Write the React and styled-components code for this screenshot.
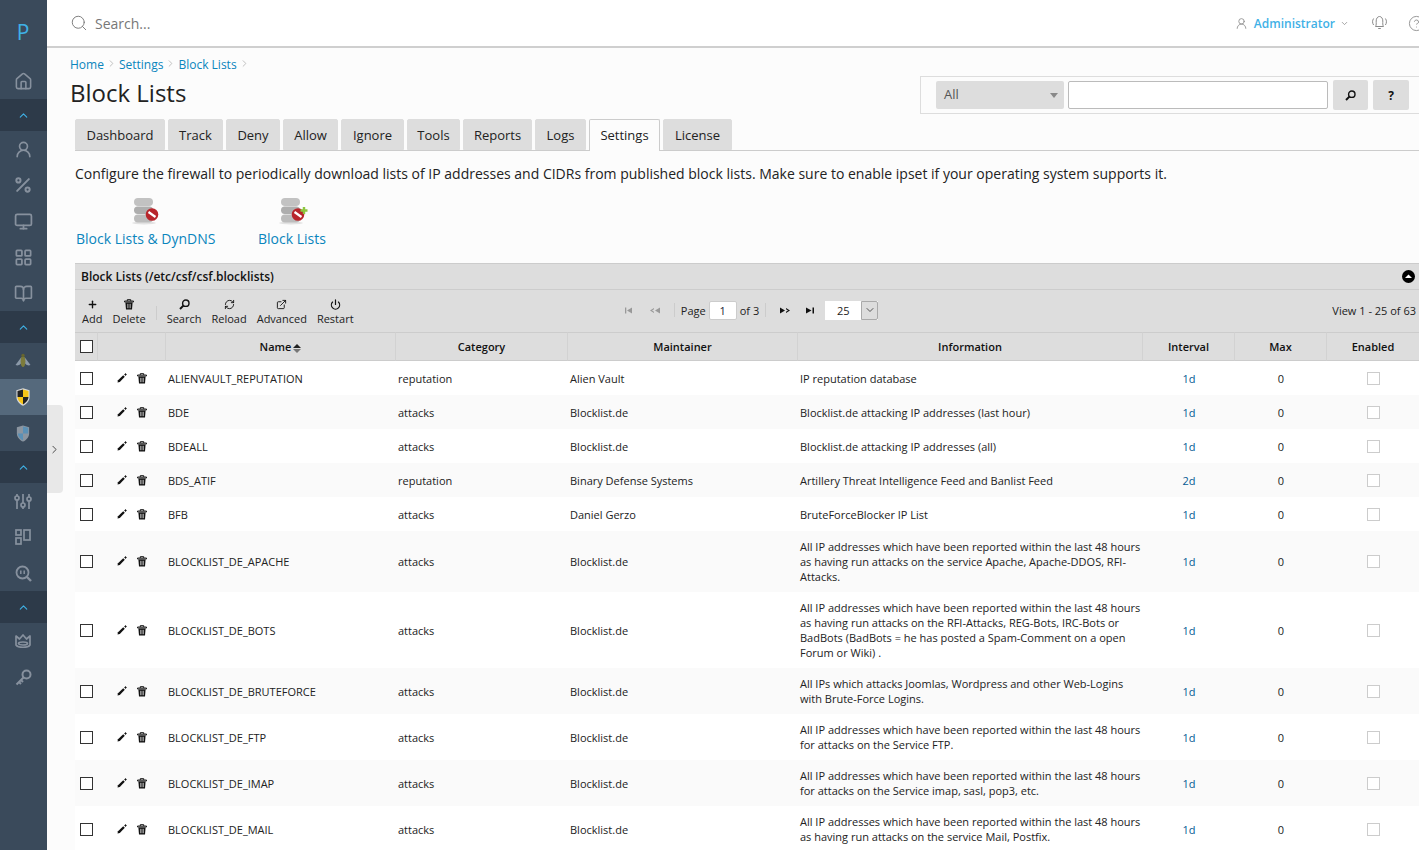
import React from 'react';
import styled, { createGlobalStyle } from 'styled-components';
import {
  Home, ChevronUp, ChevronDown, ChevronRight, UserRound, Percent, Monitor, LayoutGrid, BookOpen,
  Search, CircleHelp, Plus, Power, ExternalLink, RefreshCw,
} from 'lucide-react';

const GlobalStyle = createGlobalStyle`
  html, body { margin: 0; padding: 0; height: 100%; overflow: hidden; }
  body { font-family: "Open Sans", "Liberation Sans", sans-serif; color: #222; background: #fcfcfc; }
`;

const Page = styled.div`
  display: flex;
  width: 1419px;
  height: 850px;
  overflow: hidden;
  position: relative;
`;

const Sidebar = styled.nav`
  width: 47px;
  flex-shrink: 0;
  background: #3a4a5b;
  color: #87919e;
  display: flex;
  flex-direction: column;
`;

const Logo = styled.div`
  height: 63px;
  display: flex;
  align-items: center;
  justify-content: center;
  color: #3fb1e6;
  font-size: 21px;
  padding: 1px 1px 0 0;
  box-sizing: border-box;
`;

const SideItem = styled.div`
  height: 36px;
  display: flex;
  align-items: center;
  justify-content: center;
  padding-right: 1px;
  background: ${(p) => (p.$active ? '#55697c' : 'transparent')};
`;

const SideSection = styled.div`
  height: 32px;
  display: flex;
  align-items: center;
  justify-content: center;
  padding-right: 1px;
  background: #2d3a49;
  color: #3fb1e6;
`;

const Handle = styled.div`
  position: absolute;
  left: 47px;
  top: 405px;
  width: 16px;
  height: 88px;
  padding-right: 2px;
  box-sizing: border-box;
  background: #e8e8e8;
  border-radius: 0 4px 4px 0;
  display: flex;
  align-items: center;
  justify-content: center;
  color: #333;
`;

const Main = styled.div`
  flex: 1;
  min-width: 0;
  display: flex;
  flex-direction: column;
`;

const TopBar = styled.header`
  height: 48px;
  flex-shrink: 0;
  box-sizing: border-box;
  background: #fff;
  border-bottom: 2px solid #cfcfcf;
  display: flex;
  align-items: center;
  padding: 0 0 0 23px;
  color: #8a8a8a;
`;

const TopSearch = styled.div`
  flex: 1;
  display: flex;
  align-items: center;
  gap: 7px;
  font-size: 14px;
  color: #777;
`;

const UserLink = styled.div`
  display: flex;
  align-items: center;
  gap: 6px;
  font-size: 12px;
  font-weight: 600;
  color: #3fb1e6;
  margin-right: 22px;
  svg:last-child { margin-left: -1px; }
`;

const TopIcon = styled.div`
  display: flex;
  margin-right: ${(p) => p.$mr}px;
`;

const TitleRow = styled.div`
  height: 71px;
  flex-shrink: 0;
  display: flex;
  justify-content: space-between;
`;

const TitleBlock = styled.div`
  padding: 8px 0 0 23px;
`;

const Crumbs = styled.div`
  display: flex;
  align-items: center;
  height: 17px;
  font-size: 12px;
  color: #0a85bd;
`;

const CrumbSep = styled.span`
  display: flex;
  color: #bbb;
  margin: 0 2px 2px 2px;
`;

const PageTitle = styled.h1`
  margin: 3px 0 0;
  font-size: 24px;
  font-weight: 400;
  line-height: 33px;
  color: #222;
`;

const FilterBox = styled.div`
  align-self: flex-end;
  margin-bottom: 5px;
  box-sizing: border-box;
  width: 499px;
  height: 38px;
  border: 1px solid #ddd;
  border-right: 0;
  display: flex;
  align-items: center;
  padding-left: 15px;
`;

const FilterSelect = styled.div`
  width: 128px;
  height: 28px;
  box-sizing: border-box;
  background: #ddd;
  border-radius: 2px;
  font-size: 13px;
  color: #555;
  display: flex;
  align-items: center;
  justify-content: space-between;
  padding: 0 6px 2px 8px;
`;

const Caret = styled.span`
  width: 0;
  height: 0;
  margin-top: 3px;
  border-left: 4px solid transparent;
  border-right: 4px solid transparent;
  border-top: 5px solid #888;
`;

const FilterInput = styled.input`
  width: 260px;
  height: 28px;
  box-sizing: border-box;
  margin: 0 5px 0 4px;
  border: 1px solid #bbb;
  border-radius: 2px;
  background: #fff;
`;

const SquareBtn = styled.div`
  width: ${(p) => p.$w}px;
  height: 30px;
  margin-right: 5px;
  background: #ddd;
  border-radius: 2px;
  display: flex;
  align-items: center;
  justify-content: center;
  font-size: 12px;
  font-weight: 700;
  color: #111;
`;

const Tabs = styled.div`
  height: 32px;
  flex-shrink: 0;
  box-sizing: border-box;
  margin-left: 28px;
  border-bottom: 1px solid #ccc;
  display: flex;
  gap: 3px;
`;

const Tab = styled.div`
  width: ${(p) => p.$w}px;
  height: ${(p) => (p.$active ? 32 : 31)}px;
  padding-bottom: ${(p) => (p.$active ? 1 : 0)}px;
  box-sizing: border-box;
  background: ${(p) => (p.$active ? '#fcfcfc' : '#ddd')};
  border: 1px solid ${(p) => (p.$active ? '#ccc' : '#ddd')};
  border-bottom: ${(p) => (p.$active ? '0' : '1px solid #ddd')};
  border-radius: 2px 2px 0 0;
  font-size: 13px;
  color: #222;
  display: flex;
  align-items: center;
  justify-content: center;
`;

const Description = styled.p`
  margin: 13px 0 0 28px;
  font-size: 14px;
  line-height: 20px;
  color: #222;
`;

const Shortcuts = styled.div`
  margin: 13px 0 0 28px;
  display: flex;
  height: 54px;
  flex-shrink: 0;
`;

const Shortcut = styled.a`
  width: ${(p) => p.$w}px;
  display: flex;
  flex-direction: column;
  align-items: flex-start;
  padding-left: ${(p) => p.$pad}px;
  box-sizing: border-box;
  font-size: 14px;
  color: #0a85bd;
  line-height: 19px;
  svg { margin: 0 0 4px ${(p) => p.$iconOffset}px; display: block; }
`;

const Panel = styled.section`
  margin: 12px 0 0 28px;
  flex-shrink: 0;
  border-top: 1px solid #ccc;
`;

const PanelTitle = styled.div`
  height: 25px;
  background: #ddd;
  border-bottom: 1px solid #ccc;
  display: flex;
  align-items: center;
  justify-content: space-between;
  padding: 0 4px 0 6px;
  font-size: 12px;
  font-weight: 600;
  color: #111;
`;

const Toolbar = styled.div`
  height: 42px;
  background: #ddd;
  display: grid;
  grid-template-columns: 1fr auto 1fr;
  align-items: center;
  font-size: 11px;
  color: #222;
`;

const ToolGroup = styled.div`
  display: flex;
  padding: 3px 0 0 7px;
  gap: 10px;
  align-items: center;
`;

const ToolBtn = styled.div`
  display: flex;
  flex-direction: column;
  align-items: center;
  line-height: 15px;
  gap: 1px;
  svg { display: block; }
`;

const ToolSep = styled.span`
  width: 1px;
  height: 14px;
  background: #ccc;
`;

const Pager = styled.div`
  display: flex;
  align-items: center;
  margin-bottom: 2px;
`;

const PagerIcon = styled.span`
  display: flex;
  width: ${(p) => p.$w}px;
  margin-right: ${(p) => p.$mr || 0}px;
  justify-content: center;
  color: ${(p) => (p.$off ? '#999' : '#111')};
`;

const PagerText = styled.span`
  white-space: nowrap;
  margin: 0 ${(p) => p.$mr || 0}px 0 ${(p) => p.$ml || 0}px;
`;

const PageInput = styled.div`
  width: 28px;
  height: 19px;
  box-sizing: border-box;
  margin: 0 3px;
  background: #fff;
  border: 1px solid #ccc;
  border-radius: 2px;
  display: flex;
  align-items: center;
  justify-content: center;
  color: #223;
`;

const SizeSelect = styled.div`
  margin-left: 9px;
  width: 53px;
  height: 19px;
  display: flex;
  background: #fff;
`;

const SizeValue = styled.span`
  flex: 1;
  text-align: center;
  line-height: 19px;
`;

const SizeArrow = styled.span`
  width: 17px;
  box-sizing: border-box;
  border: 1px solid #aaa;
  border-radius: 0 2px 2px 0;
  background: #ddd;
  display: flex;
  align-items: center;
  justify-content: center;
  color: #555;
`;

const ViewInfo = styled.div`
  text-align: right;
  padding: 0 3px 2px 0;
`;

const Table = styled.table`
  width: 1344px;
  table-layout: fixed;
  border-collapse: separate;
  border-spacing: 0;
  font-size: 11px;
  line-height: 15px;
  color: #222;
`;

const HeadCell = styled.th`
  height: 29px;
  padding: 0 3px;
  background: #ddd;
  border-top: 1px solid #ccc;
  border-left: 1px solid #d2d2d2;
  border-bottom: 1px solid #ccc;
  font-weight: 600;
  color: #111;
  text-align: center;
  box-sizing: border-box;
`;

const CheckHead = styled(HeadCell)`
  padding: 0 0 0 5px;
  border-left: 0;
`;

const Row = styled.tr`
  background: #fff;
  &:nth-child(even) { background: #fafafa; }
`;

const Cell = styled.td`
  height: 34px;
  padding: 8px ${(p) => p.$pr ?? 3}px 8px ${(p) => (p.$align ? 5 : 3)}px;
  box-sizing: border-box;
  text-align: ${(p) => p.$align || 'left'};
  color: ${(p) => p.$color || '#222'};
  vertical-align: middle;
`;

const CheckCell = styled.td`
  padding: 0 0 0 5px;
  box-sizing: border-box;
`;

const Check = styled.span`
  display: block;
  width: 11px;
  height: 11px;
  border: 1px solid #333;
  background: #fff;
`;

const EnabledBox = styled.span`
  display: block;
  width: 11px;
  height: 11px;
  margin: 0 auto;
  border: 1px solid #ccc;
  background: #fff;
  position: relative;
  left: 1px;
`;

const Actions = styled.div`
  display: flex;
  gap: 10px;
  padding-left: 17px;
  color: #111;
`;

const Sort = styled.span`
  display: inline-flex;
  flex-direction: column;
  gap: 1px;
  margin-left: 2px;
  vertical-align: middle;
  &::before, &::after { content: ''; width: 0; height: 0; border-left: 4px solid transparent; border-right: 4px solid transparent; }
  &::before { border-bottom: 4px solid #222; }
  &::after { border-top: 4px solid #777; }
`;

const CollapseIcon = () => (
  <svg width="13" height="13" viewBox="0 0 13 13">
    <circle cx="6.5" cy="6.5" r="6.5" fill="#000" />
    <path d="M3 8 L6.5 4.5 L10 8 Z" fill="#fff" />
  </svg>
);

const BellIcon = () => (
  <svg width="17" height="16" viewBox="0 0 17 16" fill="none" stroke="currentColor" strokeWidth="1">
    <path d="M4.5 11.5 C5.5 10 5.2 8 5.2 6 C5.2 3.5 6.5 1.5 8.5 1.5 C10.5 1.5 11.8 3.5 11.8 6 C11.8 8 11.5 10 12.5 11.5 Z" />
    <path d="M7.2 13.5 H9.8" />
    <path d="M2.6 3.5 C1.2 5.5 1.2 8 2.6 10 M14.4 3.5 C15.8 5.5 15.8 8 14.4 10" />
  </svg>
);

const BeeIcon = () => (
  <svg width="18" height="16" viewBox="0 0 18 16">
    <path d="M7.5 4 L1.5 12 Q5 13.5 7.5 10 Z M10.5 4 L16.5 12 Q13 13.5 10.5 10 Z" fill="#8b99a8" />
    <ellipse cx="9" cy="8.5" rx="2.4" ry="5.5" fill="#7c7b3a" />
    <circle cx="9" cy="2.5" r="1.7" fill="#67662f" />
  </svg>
);

const ShieldColor = () => (
  <svg width="14" height="18" viewBox="0 0 14 18">
    <path d="M7 0.3 L13.6 2.2 V9 C13.6 13 10 16.5 7 17.8 C4 16.5 0.4 13 0.4 9 V2.2 Z" fill="#d8d8d8" />
    <path d="M7 1.5 V9 H1.5 V3 Z M7 9 H12.5 C12.3 12.5 9.5 15 7 16.4 Z" fill="#222" />
    <path d="M7 1.5 L12.5 3 V9 H7 Z M7 9 V16.4 C4.5 15 1.7 12.5 1.5 9 Z" fill="#f6c417" />
  </svg>
);

const ShieldBlue = () => (
  <svg width="14" height="17" viewBox="0 0 14 18">
    <path d="M7 0.5 L13.5 2.3 V9 C13.5 13 10 16.5 7 17.6 C4 16.5 0.5 13 0.5 9 V2.3 Z" fill="#8b95a0" />
    <path d="M7 1.5 L12.5 3 V9 H7 Z M7 9 V16.4 C4.5 15 1.7 12.5 1.5 9 Z" fill="#5b90b5" />
  </svg>
);

const SlidersIcon = () => (
  <svg width="18" height="17" viewBox="0 0 18 17" fill="none" stroke="currentColor" strokeWidth="1.7">
    <path d="M3 1 V3 M3 7 V16 M9 1 V10 M9 14 V16 M15 1 V4 M15 8 V16" />
    <circle cx="3" cy="5" r="2" />
    <circle cx="9" cy="12" r="2" />
    <circle cx="15" cy="6" r="2" />
  </svg>
);

const PanelsIcon = () => (
  <svg width="16" height="16" viewBox="0 0 16 16" fill="none" stroke="currentColor" strokeWidth="1.7">
    <rect x="1" y="1" width="5" height="5" />
    <rect x="1" y="9" width="5" height="6" />
    <rect x="9" y="1" width="6" height="10" />
  </svg>
);

const ZoomIcon = () => (
  <svg width="17" height="17" viewBox="0 0 17 17" fill="none" stroke="currentColor" strokeWidth="1.8">
    <circle cx="7.5" cy="7.5" r="6" />
    <path d="M12 12 L16 16" strokeWidth="2.4" />
    <path d="M5.8 5.5 V9 M9.2 5.5 V9" strokeWidth="1.5" />
  </svg>
);

const CrownIcon = () => (
  <svg width="16" height="15" viewBox="0 0 16 15" fill="none" stroke="currentColor" strokeWidth="1.7">
    <path d="M1 2 L4.5 5 L8 1 L11.5 5 L15 2 V11 C13 14 3 14 1 11 Z" strokeLinejoin="round" />
    <ellipse cx="8" cy="9.5" rx="4.5" ry="1.5" />
  </svg>
);

const KeyIcon = () => (
  <svg width="17" height="17" viewBox="0 0 17 17" fill="none" stroke="currentColor" strokeWidth="2">
    <circle cx="11.5" cy="5.5" r="4" />
    <path d="M8.5 8.5 L1.5 15.5 M4 13 L6 15 M6 11 L8 13" />
  </svg>
);

const DbIcon = ({ plus }) => (
  <svg width="34" height="28" viewBox="0 0 34 28">
    <ellipse cx="12" cy="26" rx="12" ry="1.5" fill="#e2e2e2" />
    <rect x="2" y="1" width="19" height="8" rx="4" fill="#c2c2c2" />
    <rect x="2" y="9.5" width="19" height="7.5" rx="3.7" fill="#aeaeae" />
    <rect x="2" y="17.5" width="19" height="8" rx="4" fill="#bcbcbc" />
    <circle cx={plus ? 19 : 20} cy="17.5" r="6.3" fill="#b8252b" />
    <path d={plus ? 'M15.5 15 L22.5 20' : 'M16.5 15 L23.5 20'} stroke="#fff" strokeWidth="2.2" />
    {plus && <path d="M25 10 V17 M21.5 13.5 H28.5" stroke="#8cc63f" strokeWidth="2.4" />}
  </svg>
);

const PencilIcon = () => (
  <svg width="10" height="10" viewBox="0 0 10 10">
    <path d="M0.5 9.5 L1 7.2 L6.2 2.2 L7.8 3.8 L2.8 8.9 Z" fill="#111" />
    <path d="M8.5 0 L9.2 1 L10 1.5 L9.2 2 L8.5 3 L7.8 2 L7 1.5 L7.8 1 Z" fill="#111" />
  </svg>
);

const TrashIcon = ({ bg = '#fff' }) => (
  <svg width="10" height="11" viewBox="0 0 10 11">
    <path d="M0.5 2 H9.5 V3 H0.5 Z M3.3 2 V0.6 H6.7 V2" fill="none" stroke="#111" strokeWidth="0.9" />
    <path d="M1.4 3.5 H8.6 L8 10.5 H2 Z" fill="#111" />
    <path d="M3.6 4.8 V9.2 M5 4.8 V9.2 M6.4 4.8 V9.2" stroke={bg} strokeWidth="0.6" />
  </svg>
);

const Mag = () => (
  <svg width="11" height="11" viewBox="0 0 11 11" fill="none" stroke="#111">
    <circle cx="6.8" cy="4.2" r="3.2" strokeWidth="1.4" />
    <path d="M4.4 6.6 L1 10" strokeWidth="2" />
  </svg>
);

const PagerGlyph = ({ d }) => (
  <svg width="10" height="7" viewBox="0 0 10 7"><path d={d} fill="currentColor" /></svg>
);

const tabs = [
  ['Dashboard', 90], ['Track', 55], ['Deny', 54], ['Allow', 55], ['Ignore', 63], ['Tools', 53],
  ['Reports', 69], ['Logs', 51], ['Settings', 71], ['License', 69],
];

const rows = [
  ['ALIENVAULT_REPUTATION', 'reputation', 'Alien Vault', 'IP reputation database', '1d'],
  ['BDE', 'attacks', 'Blocklist.de', 'Blocklist.de attacking IP addresses (last hour)', '1d'],
  ['BDEALL', 'attacks', 'Blocklist.de', 'Blocklist.de attacking IP addresses (all)', '1d'],
  ['BDS_ATIF', 'reputation', 'Binary Defense Systems', 'Artillery Threat Intelligence Feed and Banlist Feed', '2d'],
  ['BFB', 'attacks', 'Daniel Gerzo', 'BruteForceBlocker IP List', '1d'],
  ['BLOCKLIST_DE_APACHE', 'attacks', 'Blocklist.de', 'All IP addresses which have been reported within the last 48 hours as having run attacks on the service Apache, Apache-DDOS, RFI-Attacks.', '1d'],
  ['BLOCKLIST_DE_BOTS', 'attacks', 'Blocklist.de', 'All IP addresses which have been reported within the last 48 hours as having run attacks on the RFI-Attacks, REG-Bots, IRC-Bots or BadBots (BadBots = he has posted a Spam-Comment on a open Forum or Wiki) .', '1d'],
  ['BLOCKLIST_DE_BRUTEFORCE', 'attacks', 'Blocklist.de', 'All IPs which attacks Joomlas, Wordpress and other Web-Logins with Brute-Force Logins.', '1d'],
  ['BLOCKLIST_DE_FTP', 'attacks', 'Blocklist.de', 'All IP addresses which have been reported within the last 48 hours for attacks on the Service FTP.', '1d'],
  ['BLOCKLIST_DE_IMAP', 'attacks', 'Blocklist.de', 'All IP addresses which have been reported within the last 48 hours for attacks on the Service imap, sasl, pop3, etc.', '1d'],
  ['BLOCKLIST_DE_MAIL', 'attacks', 'Blocklist.de', 'All IP addresses which have been reported within the last 48 hours as having run attacks on the service Mail, Postfix.', '1d'],
];

const columns = [22, 68, 230, 172, 230, 345, 92, 92, 93];

const App = () => (
  <>
    <GlobalStyle />
    <Page>
      <Sidebar>
        <Logo>P</Logo>
        <SideItem><Home size={19} /></SideItem>
        <SideSection><ChevronUp size={13} /></SideSection>
        <SideItem><UserRound size={19} strokeWidth={2.1} /></SideItem>
        <SideItem><Percent size={20} strokeWidth={2.4} /></SideItem>
        <SideItem><Monitor size={19} strokeWidth={2.2} /></SideItem>
        <SideItem><LayoutGrid size={19} strokeWidth={2.2} /></SideItem>
        <SideItem><BookOpen size={19} strokeWidth={2.1} /></SideItem>
        <SideSection><ChevronUp size={13} /></SideSection>
        <SideItem><BeeIcon /></SideItem>
        <SideItem $active><ShieldColor /></SideItem>
        <SideItem><ShieldBlue /></SideItem>
        <SideSection><ChevronUp size={13} /></SideSection>
        <SideItem><SlidersIcon /></SideItem>
        <SideItem><PanelsIcon /></SideItem>
        <SideItem><ZoomIcon /></SideItem>
        <SideSection><ChevronUp size={13} /></SideSection>
        <SideItem><CrownIcon /></SideItem>
        <SideItem><KeyIcon /></SideItem>
      </Sidebar>
      <Handle><ChevronRight size={13} strokeWidth={1.6} /></Handle>
      <Main>
        <TopBar>
          <TopSearch><Search size={18} strokeWidth={1.25} />Search...</TopSearch>
          <UserLink>
            <UserRound size={13} color="#888" strokeWidth={1.5} />
            Administrator
            <ChevronDown size={9} color="#888" />
          </UserLink>
          <TopIcon $mr={20}><BellIcon /></TopIcon>
          <TopIcon $mr={-6}><CircleHelp size={17} strokeWidth={1.25} /></TopIcon>
        </TopBar>
        <TitleRow>
          <TitleBlock>
            <Crumbs>
              Home<CrumbSep><ChevronRight size={11} /></CrumbSep>
              Settings<CrumbSep><ChevronRight size={11} /></CrumbSep>
              Block Lists<CrumbSep><ChevronRight size={11} /></CrumbSep>
            </Crumbs>
            <PageTitle>Block Lists</PageTitle>
          </TitleBlock>
          <FilterBox>
            <FilterSelect>All<Caret /></FilterSelect>
            <FilterInput readOnly />
            <SquareBtn $w={35}><Mag /></SquareBtn>
            <SquareBtn $w={36}>?</SquareBtn>
          </FilterBox>
        </TitleRow>
        <Tabs>
          {tabs.map(([name, w]) => (
            <Tab key={name} $w={w} $active={name === 'Settings'}>{name}</Tab>
          ))}
        </Tabs>
        <Description>
          Configure the firewall to periodically download lists of IP addresses and CIDRs from published block lists. Make sure to enable ipset if your operating system supports it.
        </Description>
        <Shortcuts>
          <Shortcut $w={183} $pad={1} $iconOffset={56}><DbIcon />Block Lists &amp; DynDNS</Shortcut>
          <Shortcut $w={120} $pad={0} $iconOffset={21}><DbIcon plus />Block Lists</Shortcut>
        </Shortcuts>
        <Panel>
          <PanelTitle>Block Lists (/etc/csf/csf.blocklists)<CollapseIcon /></PanelTitle>
          <Toolbar>
            <ToolGroup>
              <ToolBtn><Plus size={11} color="#111" strokeWidth={3} />Add</ToolBtn>
              <ToolBtn><TrashIcon bg="#ddd" />Delete</ToolBtn>
              <ToolSep />
              <ToolBtn><Mag />Search</ToolBtn>
              <ToolBtn><RefreshCw size={11} color="#111" strokeWidth={2} />Reload</ToolBtn>
              <ToolBtn><ExternalLink size={11} color="#111" strokeWidth={2} />Advanced</ToolBtn>
              <ToolBtn><Power size={11} color="#111" strokeWidth={2.6} />Restart</ToolBtn>
            </ToolGroup>
            <Pager>
              <PagerIcon $w={26} $off><PagerGlyph d="M1 0.5 H2.3 V6.5 H1 Z M3 3.5 L8 0.5 V6.5 Z" /></PagerIcon>
              <PagerIcon $w={26} $mr={6} $off><PagerGlyph d="M0 3.5 L4 1 V2.2 L2 3.5 L4 4.8 V6 Z M5 3.5 L10 0.5 V6.5 Z" /></PagerIcon>
              <ToolSep />
              <PagerText $ml={6}>Page</PagerText>
              <PageInput>1</PageInput>
              <PagerText $mr={6}>of 3</PagerText>
              <ToolSep />
              <PagerIcon $w={38}><PagerGlyph d="M0 0.5 L5 3.5 L0 6.5 Z M6 1 L10 3.5 L6 6 V4.8 L8 3.5 L6 2.2 Z" /></PagerIcon>
              <PagerIcon $w={12}><PagerGlyph d="M1 0.5 L6.5 3.5 L1 6.5 Z M7.5 0.5 H9 V6.5 H7.5 Z" /></PagerIcon>
              <SizeSelect>
                <SizeValue>25</SizeValue>
                <SizeArrow><ChevronDown size={12} /></SizeArrow>
              </SizeSelect>
            </Pager>
            <ViewInfo>View 1 - 25 of 63</ViewInfo>
          </Toolbar>
          <Table>
            <colgroup>
              {columns.map((w, i) => <col key={i} style={{ width: w }} />)}
            </colgroup>
            <thead>
              <tr>
                <CheckHead><Check /></CheckHead>
                <HeadCell />
                <HeadCell>Name<Sort /></HeadCell>
                <HeadCell>Category</HeadCell>
                <HeadCell>Maintainer</HeadCell>
                <HeadCell>Information</HeadCell>
                <HeadCell>Interval</HeadCell>
                <HeadCell>Max</HeadCell>
                <HeadCell>Enabled</HeadCell>
              </tr>
            </thead>
            <tbody>
              {rows.map(([name, category, maintainer, info, interval]) => (
                <Row key={name}>
                  <CheckCell><Check /></CheckCell>
                  <Cell><Actions><PencilIcon /><TrashIcon /></Actions></Cell>
                  <Cell>{name}</Cell>
                  <Cell>{category}</Cell>
                  <Cell>{maintainer}</Cell>
                  <Cell $pr={0}>{info}</Cell>
                  <Cell $align="center" $color="#055a94">{interval}</Cell>
                  <Cell $align="center">0</Cell>
                  <Cell><EnabledBox /></Cell>
                </Row>
              ))}
            </tbody>
          </Table>
        </Panel>
      </Main>
    </Page>
  </>
);

export default App;
